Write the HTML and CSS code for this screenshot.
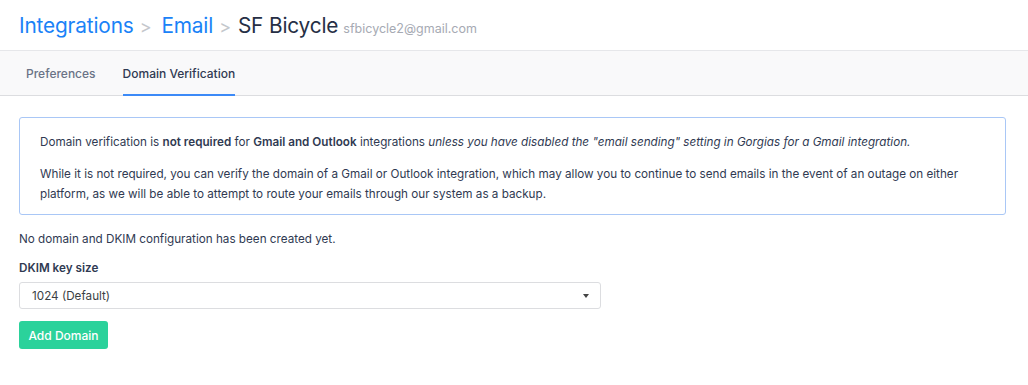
FILE: index.html
```html
<!DOCTYPE html>
<html lang="en">
<head>
  <meta charset="UTF-8" />
  <title>Email - Domain Verification</title>
  <link rel="stylesheet" href="styles.css">
</head>
<body>
  <div class="page-header">
    <h1 class="breadcrumb">
      <a href="#">Integrations</a>
      <span class="sep">&gt;</span>
      <a href="#">Email</a>
      <span class="sep">&gt;</span>
      <span class="current">SF Bicycle</span>
      <span class="address">sfbicycle2@gmail.com</span>
    </h1>
  </div>
  <div class="tabs">
    <a href="#" class="tab">Preferences</a>
    <a href="#" class="tab active">Domain Verification</a>
  </div>
  <div class="content">
    <div class="info-box">
      <p>Domain verification is <b>not required</b> for <b>Gmail and Outlook</b> integrations <i>unless you have disabled the "email sending" setting in Gorgias for a Gmail integration.</i></p>
      <p>While it is not required, you can verify the domain of a Gmail or Outlook integration, which may allow you to continue to send emails in the event of an outage on either platform, as we will be able to attempt to route your emails through our system as a backup.</p>
    </div>
    <p class="empty">No domain and DKIM configuration has been created yet.</p>
    <label class="field-label" for="keySize">DKIM key size</label>
    <div class="select">
      <span id="keySize">1024 (Default)</span>
      <span class="caret"></span>
    </div>
    <button class="btn-add">Add Domain</button>
  </div>
</body>
</html>
```

FILE: styles.css
```css
body {
  margin: 0;
  font-family: Inter, "Noto Sans", sans-serif;
  color: #161616;
  background: #fff;
}
a { text-decoration: none; }
.page-header {
  height: 50px;
  border-bottom: 1px solid #e6e7ea;
  padding: 0 19px;
  display: flex;
  align-items: center;
}
.breadcrumb {
  margin: 0;
  font-size: 20.8px;
  font-weight: 400;
  display: flex;
  align-items: baseline;
  white-space: nowrap;
  letter-spacing: -0.15px;
}
.breadcrumb a { color: #1a82f7; }
.breadcrumb .sep {
  color: #c4c7cc;
  font-size: 18px;
  margin: 0 7px 0 6px;
}
.breadcrumb .sep + a { margin-left: 3px; }
.breadcrumb .current { color: #262f45; }
.breadcrumb .address {
  color: #a6aab3;
  font-size: 12.5px;
  margin-left: 5px;
  letter-spacing: 0;
}
.tabs {
  height: 44px;
  background: #f9f9fa;
  border-bottom: 1px solid #dcdde0;
  display: flex;
  padding-left: 26px;
  gap: 27px;
}
.tab {
  font-size: 12px;
  font-weight: 500;
  color: #6a7386;
  display: flex;
  align-items: center;
  border-bottom: 2px solid transparent;
  margin-bottom: -1px;
  padding-top: 2px;
}
.tab.active {
  color: #303a52;
  border-bottom-color: #3c8af7;
}
.content {
  padding: 21px 19px 0 19px;
  font-size: 11.7px;
  color: #303a52;
}
.info-box {
  width: 987px;
  box-sizing: border-box;
  border: 1px solid #a9c7f6;
  border-radius: 3px;
  padding: 10px 20px 6px 20px;
  line-height: 20px;
}
.info-box p { margin: 4px 0; }
.info-box p + p { margin-top: 12px; }
.info-box b { font-weight: 600; }
.empty {
  margin: 14px 0 0 0;
  line-height: 20px;
}
.field-label {
  display: block;
  font-weight: 600;
  margin-top: 10px;
  line-height: 18px;
}
.select {
  width: 582px;
  height: 27px;
  box-sizing: border-box;
  margin-top: 5px;
  border: 1px solid #dcdde0;
  border-radius: 3px;
  display: flex;
  align-items: center;
  justify-content: space-between;
  padding: 0 11px 0 12px;
  color: #3b3f45;
}
.caret {
  width: 0;
  height: 0;
  border-left: 3.5px solid transparent;
  border-right: 3.5px solid transparent;
  border-top: 4px solid #444;
}
.btn-add {
  display: block;
  margin-top: 12px;
  width: 89px;
  height: 28px;
  border: none;
  border-radius: 3px;
  background: #2bd29b;
  color: #fff;
  font-family: Inter, "Noto Sans", sans-serif;
  font-size: 12px;
  font-weight: 500;
  padding: 0;
}
```
